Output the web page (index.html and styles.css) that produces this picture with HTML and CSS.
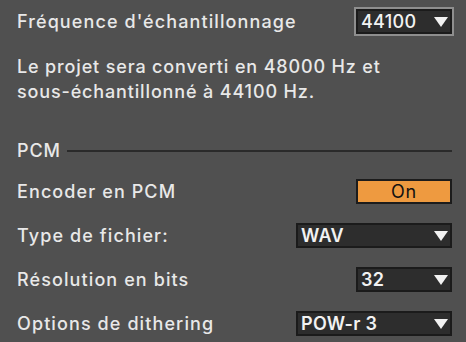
FILE: index.html
```html
<!DOCTYPE html>
<html lang="fr">
<head>
    <meta charset="UTF-8">
    <title>Export audio</title>
    <link rel="stylesheet" href="styles.css">
</head>
<body>
    <div class="panel">
        <div class="row row-first">
            <span class="label">Fréquence d'échantillonnage</span>
            <div class="select select-focus select-narrow">
                <span class="value value-light">44100</span>
                <svg class="arrow" width="14" height="10" viewBox="0 0 14 10"><path d="M0 0H14L7 10Z" fill="#f2f2f2"/></svg>
            </div>
        </div>

        <p class="info">Le projet sera converti en 48000 Hz et<br>sous-échantillonné à 44100 Hz.</p>

        <div class="section">
            <span class="section-title">PCM</span>
            <span class="section-line"></span>
        </div>

        <div class="row">
            <span class="label">Encoder en PCM</span>
            <div class="toggle">On</div>
        </div>

        <div class="row">
            <span class="label">Type de fichier:</span>
            <div class="select select-wide">
                <span class="value">WAV</span>
                <svg class="arrow" width="14" height="10" viewBox="0 0 14 10"><path d="M0 0H14L7 10Z" fill="#f2f2f2"/></svg>
            </div>
        </div>

        <div class="row">
            <span class="label">Résolution en bits</span>
            <div class="select select-narrow">
                <span class="value">32</span>
                <svg class="arrow" width="14" height="10" viewBox="0 0 14 10"><path d="M0 0H14L7 10Z" fill="#f2f2f2"/></svg>
            </div>
        </div>

        <div class="row">
            <span class="label">Options de dithering</span>
            <div class="select select-wide">
                <span class="value">POW-r 3</span>
                <svg class="arrow" width="14" height="10" viewBox="0 0 14 10"><path d="M0 0H14L7 10Z" fill="#f2f2f2"/></svg>
            </div>
        </div>
    </div>
</body>
</html>
```

FILE: styles.css
```css
body {
    margin: 0;
    background: #505050;
    font-family: Inter, "Open Sans", sans-serif;
    color: #e8e8e8;
    font-size: 18px;
    font-weight: 500;
    letter-spacing: 0.85px;
}
.panel {
    padding: 9px 14px 0 17px;
}
.row {
    display: flex;
    justify-content: space-between;
    align-items: center;
    height: 25px;
    margin-bottom: 19px;
}
.row-first {
    margin-bottom: 0;
}
.label {
    white-space: nowrap;
    letter-spacing: 1.1px;
}
.info {
    margin: 20px 0 0;
    line-height: 25px;
}
.section {
    display: flex;
    align-items: center;
    margin: 34px 0 16px;
    height: 25px;
}
.section-title {
    margin-right: 6px;
}
.section-line {
    flex: 1;
    height: 2px;
    background: #2a2a2a;
    margin-top: 1px;
}
.select {
    box-sizing: border-box;
    height: 25px;
    display: flex;
    align-items: center;
    justify-content: space-between;
    background: #2d2d2d;
    border: 2px solid #1b1b1b;
    padding: 0 2px 0 3px;
    letter-spacing: 0.3px;
}
.select-focus {
    outline: 2px solid #8e8e8e;
}
.select-narrow {
    width: 96px;
}
.select-wide {
    width: 156px;
}
.value {
    font-weight: 600;
    color: #f2f2f2;
}
.value-light {
    font-weight: 500;
}
.arrow {
    display: block;
}
.toggle {
    box-sizing: border-box;
    width: 96px;
    height: 25px;
    background: #ee9a40;
    border: 2px solid #1c1c1c;
    color: #111;
    font-weight: 400;
    text-align: center;
    line-height: 21px;
}
```
